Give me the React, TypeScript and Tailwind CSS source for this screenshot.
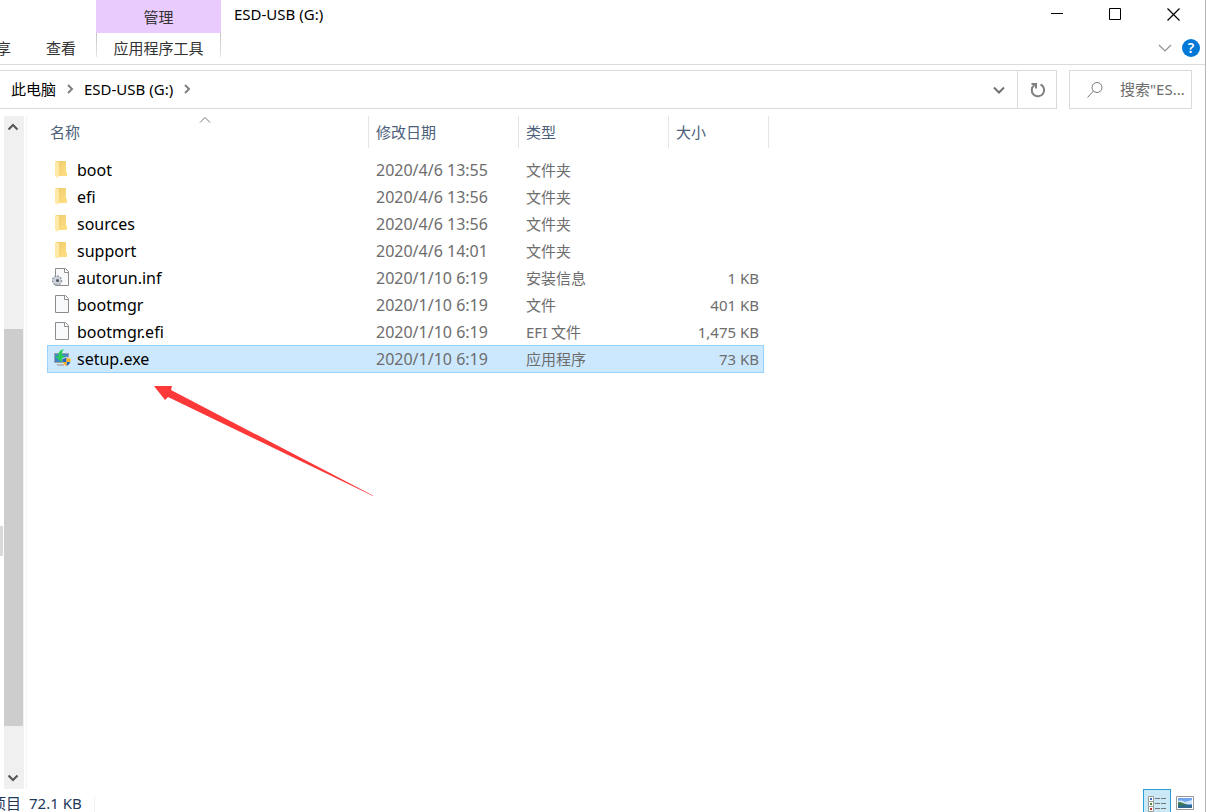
import React from 'react'

type FileKind = 'folder' | 'config' | 'file' | 'setup'

interface FileEntry {
  name: string
  date: string
  type: string
  size: string
  kind: FileKind
}

const files: FileEntry[] = [
  { name: 'boot', date: '2020/4/6 13:55', type: '文件夹', size: '', kind: 'folder' },
  { name: 'efi', date: '2020/4/6 13:56', type: '文件夹', size: '', kind: 'folder' },
  { name: 'sources', date: '2020/4/6 13:56', type: '文件夹', size: '', kind: 'folder' },
  { name: 'support', date: '2020/4/6 14:01', type: '文件夹', size: '', kind: 'folder' },
  { name: 'autorun.inf', date: '2020/1/10 6:19', type: '安装信息', size: '1 KB', kind: 'config' },
  { name: 'bootmgr', date: '2020/1/10 6:19', type: '文件', size: '401 KB', kind: 'file' },
  { name: 'bootmgr.efi', date: '2020/1/10 6:19', type: 'EFI 文件', size: '1,475 KB', kind: 'file' },
  { name: 'setup.exe', date: '2020/1/10 6:19', type: '应用程序', size: '73 KB', kind: 'setup' },
]

const selectedName = 'setup.exe'

const Chevron: React.FC<{ d: string; className: string; width?: number }> = ({
  d,
  className,
  width = 2,
}) => (
  <svg viewBox="0 0 14 14" className={className} fill="none" stroke="currentColor" strokeWidth={width}>
    <path d={d} />
  </svg>
)

const UP = 'M2.5 9.5 7 5l4.5 4.5'
const DOWN = 'M2 4.5 7 9.5l5-5'
const RIGHT = 'M5 3l4 4-4 4'

const Page: React.FC = () => (
  <>
    <path d="M3.5.5h10l3 3v14h-13z" fill="#f8f9fa" stroke="#8c8c8c" />
    <path d="M12.500.5v4h4" fill="#fff" stroke="#8c8c8c" />
  </>
)

const FileIcon: React.FC<{ kind: FileKind }> = ({ kind }) => (
  <svg viewBox="0 0 20 20" className="h-5 w-5 shrink-0">
    {kind === 'folder' && (
      <>
        <defs>
          <linearGradient id="folder-back" x1="0" x2="1" y1="0" y2="1">
            <stop offset="0" stopColor="#eccb6c" />
            <stop offset="1" stopColor="#ffe084" />
          </linearGradient>
        </defs>
        <path d="M4 1h10v10l1 1v4H4z" fill="url(#folder-back)" />
        <path d="M3 1l4 1v13l-1 3-3-2z" fill="#ffe9a8" />
      </>
    )}
    {kind === 'file' && <Page />}
    {kind === 'config' && (
      <>
        <Page />
        <circle cx="5" cy="12.500" r="4.200" fill="#c3c9ce" stroke="#8b949b" strokeWidth="2" strokeDasharray="1.600 1.200" />
        <circle cx="5" cy="12.500" r="3.800" fill="#cdd3d8" />
        <circle cx="5.500" cy="12.500" r="1.500" fill="#4b5258" />
      </>
    )}
    {kind === 'setup' && (
      <>
        <path d="M2 4h15v10H2z" fill="#9aa3ab" />
        <path d="M3 5h13v8H3z" fill="#3f86c9" />
        <path d="M4 15h8v2H6z" fill="#b4bac0" />
        <path d="M12 0C8 1 6 3 6.500 7.500L3 7l6 6 4-7-3 .8C9.500 4 10.500 2 12 0z" fill="#25cf57" />
        <path d="M14.500 7.500c1.200 1 2.500 1.400 4.500 1.400 0 4.500-1.500 7.300-4.500 9.100-3-1.800-4.500-4.600-4.500-9.100 2 0 3.300-.4 4.500-1.400z" fill="#dfe5ea" />
        <path d="M14.500 8.500V13h-3.800c-.3-1-.3-2-.3-3.300 1.600 0 2.900-.4 4.100-1.200zM14.500 13h3.800c-.6 1.700-1.800 3-3.800 4.200z" fill="#2464b4" />
        <path d="M14.500 8.500c1.200.8 2.500 1.200 4.100 1.200 0 1.300 0 2.300-.3 3.300h-3.800zM10.700 13h3.800v4.200c-2-1.200-3.200-2.500-3.800-4.200z" fill="#f5b324" />
      </>
    )}
  </svg>
)

const TitleBar: React.FC = () => (
  <header className="flex h-[33px] shrink-0 items-stretch">
    <div className="ml-24 flex w-[125px] items-center justify-center bg-[#e9cbfd] text-[#333]">管理</div>
    <h1 className="flex-1 pt-[3px] pl-[13px] text-black">ESD-USB (G:)</h1>
    <div className="flex h-7 pr-0.5 text-black">
      <button aria-label="最小化" className="flex w-[58px] items-center justify-center">
        <svg viewBox="0 0 13 13" className="h-[13px] w-[13px]">
          <path d="M0 5h12v1H0z" />
        </svg>
      </button>
      <button aria-label="最大化" className="flex w-[58px] items-center justify-center">
        <svg viewBox="0 0 13 13" className="h-[13px] w-[13px]" fill="none" stroke="black">
          <path d="M.5.5h11v11H.5z" />
        </svg>
      </button>
      <button aria-label="关闭" className="flex w-[59px] items-center justify-center">
        <svg viewBox="0 0 13 13" className="h-[13px] w-[13px]" fill="none" stroke="black" strokeWidth="1.2">
          <path d="M.5.5l12 12M12.500.5l-12 12" />
        </svg>
      </button>
    </div>
  </header>
)

const RibbonTabs: React.FC = () => (
  <nav className="flex h-8 shrink-0 items-start border-b border-[#dadbdc] text-[#333]">
    <button className="-ml-1 h-[30px]">享</button>
    <button className="ml-5 h-[30px] w-[65px] pl-[15px] text-left">查看</button>
    <div className="flex h-6 w-[125px] bg-linear-to-b from-[#c4c4c4] to-[#e6e6e6] px-px">
      <button className="h-[30px] flex-1 bg-white">应用程序工具</button>
    </div>
    <div className="ml-auto flex h-[30px] items-center gap-2.5 pr-[5px]">
      <button aria-label="展开功能区" className="text-[#909090]">
        <Chevron d="M1 4l6 6 6-6" className="h-[14px] w-[14px]" width={1.2} />
      </button>
      <button
        aria-label="帮助"
        className="flex h-[18px] w-[18px] items-center justify-center rounded-full bg-[#0078d7] text-[14px] font-semibold text-white"
      >
        ?
      </button>
    </div>
  </nav>
)

const AddressBar: React.FC = () => (
  <div className="flex h-[39px] shrink-0 gap-3 pr-[13px]">
    <div className="flex flex-1 items-stretch border border-l-0 border-[#d9d9d9] text-black">
      <button className="pb-0.5 pl-[11px]">此电脑</button>
      <Chevron d={RIGHT} className="mx-[7px] mt-[11px] h-[14px] w-[14px] text-[#808080]" />
      <button className="pb-0.5">ESD-USB (G:)</button>
      <Chevron d={RIGHT} className="mx-[7px] mt-[11px] h-[14px] w-[14px] text-[#808080]" />
      <button aria-label="以前的位置" className="ml-auto w-9 text-[#707070]">
        <Chevron d={DOWN} className="mx-auto h-[14px] w-[14px]" />
      </button>
      <button aria-label="刷新" className="w-[39px] border-l border-[#d9d9d9] pl-0.5 text-[#808080]">
        <svg viewBox="0 0 16 16" className="mx-auto h-4 w-4" fill="none" stroke="currentColor" strokeWidth="2">
          <path d="M10.500 2.500a6.200 6.200 0 1 1-6 .5" />
          <path d="M1.500 2h4.500v4.500" />
        </svg>
      </button>
    </div>
    <label className="flex w-[123px] items-center border border-[#d9d9d9]">
      <svg viewBox="0 0 16 16" className="ml-[17px] h-4 w-4 shrink-0" fill="none" stroke="#777">
        <circle cx="10" cy="5.500" r="5" />
        <path d="M6.500 9 .5 15.500" />
      </svg>
      <input
        aria-label="搜索"
        placeholder={'搜索"ES...'}
        className="ml-[17px] w-0 flex-1 pb-0.5 outline-none placeholder:text-[#6d6d6d]"
      />
    </label>
  </div>
)

const TreeScrollBar: React.FC = () => (
  <aside className="flex w-[27px] shrink-0 border-r border-[#f4f4f4]">
    <div className="flex w-[3px] flex-col">
      <div className="flex-[410]" />
      <div className="h-[30px] bg-[#d9d9d9]" />
      <div className="flex-[233]" />
    </div>
    <div className="ml-px flex w-5 flex-col bg-[#f0f0f0] text-[#555]">
      <button aria-label="向上滚动" className="h-[22px] pr-0.5">
        <Chevron d={UP} className="mx-auto h-[14px] w-[14px]" />
      </button>
      <div className="flex flex-1 flex-col">
        <div className="flex-[191]" />
        <div className="mr-px flex-[397] bg-[#cdcdcd]" />
        <div className="flex-[41]" />
      </div>
      <button aria-label="向下滚动" className="h-[22px] pr-0.5">
        <Chevron d="M2.500 4.500 7 9l4.500-4.500" className="mx-auto h-[14px] w-[14px]" />
      </button>
    </div>
  </aside>
)

const FileTable: React.FC = () => (
  <table className="w-[717px] table-fixed border-collapse">
    <colgroup>
      <col className="w-[322px]" />
      <col className="w-[150px]" />
      <col className="w-[150px]" />
      <col />
    </colgroup>
    <thead>
      <tr className="h-10 text-left align-top text-[#4c607a]">
        <th className="relative p-0 font-normal">
          <div className="h-8 border-r border-[#e5e5e5] pl-[3px] leading-8">名称</div>
          <Chevron d="M2 8.500 7 3.500l5 5" className="absolute -top-0.5 left-[151px] h-[14px] w-[14px] text-[#777]" width={1} />
        </th>
        <th className="p-0 font-normal">
          <div className="h-8 border-r border-[#e5e5e5] pl-[7px] leading-8">修改日期</div>
        </th>
        <th className="p-0 font-normal">
          <div className="h-8 border-r border-[#e5e5e5] pl-[7px] leading-8">类型</div>
        </th>
        <th className="p-0 font-normal">
          <div className="h-8 w-[100px] border-r border-[#e5e5e5] pl-[7px] leading-8">大小</div>
        </th>
      </tr>
    </thead>
    <tbody>
      {files.map((file) => (
        <tr
          key={file.name}
          className={
            file.name === selectedName
              ? 'h-7 bg-[#cce8ff] text-[#6d6d6d] outline -outline-offset-1 outline-[#99d1ff]'
              : 'h-[27px] text-[#6d6d6d]'
          }
        >
          <td className="p-0 text-base leading-[22px]">
            <div className="flex items-center gap-[5px] pl-[5px] text-black">
              <FileIcon kind={file.kind} />
              {file.name}
            </div>
          </td>
          <td className="p-0 pl-[7px] text-base leading-[22px]">{file.date}</td>
          <td className="p-0 pl-[7px]">{file.type}</td>
          <td className="p-0 pr-[5px] text-right">{file.size}</td>
        </tr>
      ))}
    </tbody>
  </table>
)

const StatusBar: React.FC = () => (
  <footer className="flex h-[23px] shrink-0 items-start overflow-hidden text-[#1e395b]">
    <div className="-ml-[9px] flex h-7 items-center gap-2 pr-3">
      <span>项目</span>
      <span>72.1 KB</span>
    </div>
    <div className="mt-2 h-4 w-px bg-[#f0f0f0]" />
    <div className="ml-auto flex pr-[11px]">
      <button aria-label="详细信息" className="flex h-[30px] w-7 justify-center border border-[#26a0da] bg-[#cbe8f6] pt-1.5">
        <svg viewBox="0 0 18 18" className="h-[18px] w-[18px]">
          {[0, 5, 10].map((y, i) => (
            <g key={y} transform={`translate(0 ${y})`}>
              <path d="M.5.5h5v5h-5z" fill="#fff" stroke="#999" />
              <path d="M2 2h2v2H2z" fill={['#3d6fb5', '#4f8a3c', '#c03a2b'][i]} />
              <path d="M7 2h5v1H7zM13 2h5v1h-5z" fill="#777" />
            </g>
          ))}
        </svg>
      </button>
      <button aria-label="大缩略图" className="ml-[5px] h-7">
        <svg viewBox="0 0 18 14" className="h-[14px] w-[18px]">
          <path d="M.5.5h17v13H.5z" fill="#fff" stroke="#999" />
          <path d="M2 2h14v10H2z" fill="#6fa6ee" />
          <path d="M2 5c3-1 5 0 7 1l7-2v4H2z" fill="#d3e6fa" />
          <path d="M2 6c4 0 7 2 10 3H2z" fill="#417a4f" />
          <path d="M2 9h14v3H2z" fill="#31688e" />
        </svg>
      </button>
    </div>
  </footer>
)

const App: React.FC = () => {
  return (
    <div className="flex h-screen flex-col overflow-hidden border-r border-[#b4b4b4] bg-white font-['Noto_Sans','Noto_Sans_CJK_SC',sans-serif] text-[15px] leading-[22px]">
      <TitleBar />
      <RibbonTabs />
      <div className="h-[5px] shrink-0" />
      <AddressBar />
      <div className="mt-[7px] flex min-h-0 flex-1">
        <TreeScrollBar />
        <main className="relative flex-1 pl-5">
          <FileTable />
          <svg viewBox="0 0 220 112" className="absolute top-[269px] left-[127px] h-[112px] w-[220px]">
            <path d="M0 1h18l-1 4 202 105.500v.5L14 12l-3 3z" fill="#fc3838" />
          </svg>
        </main>
      </div>
      <StatusBar />
    </div>
  )
}

export default App
